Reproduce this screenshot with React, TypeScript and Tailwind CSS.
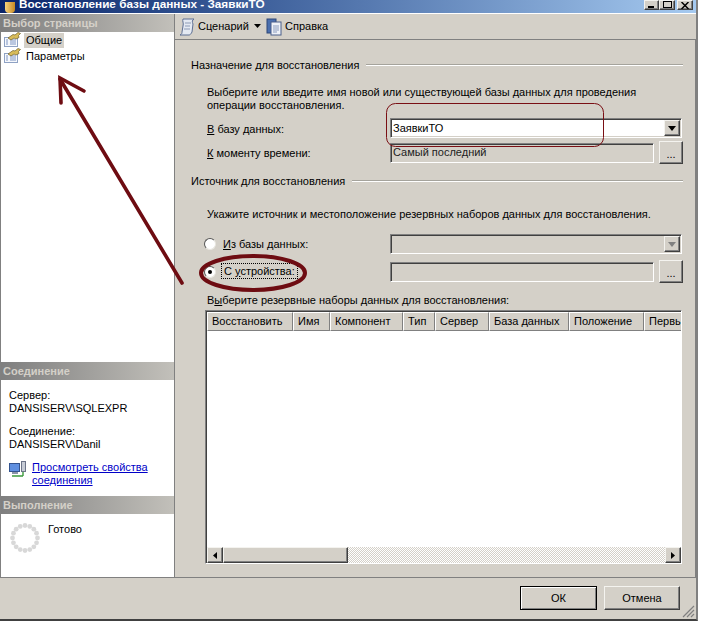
import React from "react";

const sunken = "border border-t-[#808080] border-l-[#808080] border-r-white border-b-white shadow-[inset_1px_1px_0_#404040,inset_-1px_-1px_0_#d4d0c8]";
const raised = "border border-t-[#f4f3ef] border-l-[#f4f3ef] border-r-[#404040] border-b-[#404040] shadow-[inset_-1px_-1px_0_#808080]";

function PropsIcon() {
  return (
    <svg width="17" height="16" viewBox="0 0 17 16" className="shrink-0">
      <rect x="0.5" y="5.5" width="13" height="9" fill="#f6f8fc" stroke="#8fa2c4" />
      <path d="M2 8h2M6 8h6M2 10h2M6 10h6M2 12h2M6 12h6" stroke="#7f96c4" />
      <path d="M4 6l5-3.5 2 .5 3-2.5 2.5 1-2 2 .5 2-3 1.5-2-1-3 2z" fill="#d8bc5a" stroke="#6e5f2a" strokeWidth="0.7" />
    </svg>
  );
}
function ScrollIcon() {
  return (
    <svg width="18" height="18" viewBox="0 0 18 18" className="shrink-0">
      <path d="M5 1h11c-2 1-2 3-1 5l-1 8c-1 2-2 3-3 3H2c2-1 2-2 2-3l1-6C6 5 4 3 5 1z" fill="#e4e9f2" stroke="#5d6f93" />
      <path d="M7 5h6M7 8h5M6 11h6" stroke="#8c9ab5" />
    </svg>
  );
}
function HelpIcon() {
  return (
    <svg width="16" height="18" viewBox="0 0 16 18" className="shrink-0">
      <rect x="1" y="1" width="9" height="14" fill="#4a6fae" stroke="#2d4677" />
      <rect x="5" y="4" width="10" height="13" fill="#eef1f7" stroke="#4a5f8a" />
      <path d="M7 8h6M7 10h6M7 12h6M7 14h4" stroke="#8a9bbd" />
    </svg>
  );
}
function ConnIcon() {
  return (
    <svg width="18" height="18" viewBox="0 0 18 18" className="shrink-0">
      <rect x="0.5" y="2.5" width="10" height="8" fill="#5f8fe0" stroke="#33538f" />
      <rect x="3" y="11" width="6" height="2" fill="#8a94a8" />
      <rect x="12.5" y="0.5" width="4" height="10" fill="#c7ccd6" stroke="#6c7488" />
      <path d="M3 15h11M14 15v-4" stroke="#3d9a3d" strokeWidth="1.4" fill="none" />
    </svg>
  );
}
function Spinner() {
  const dots = Array.from({ length: 16 }, (_, i) => {
    const a = (i / 16) * Math.PI * 2;
    return <circle key={i} cx={15 + 12.5 * Math.cos(a)} cy={15 + 12.5 * Math.sin(a)} r="2.4" fill="#d8d8d8" />;
  });
  return <svg width="30" height="30" viewBox="0 0 30 30" className="shrink-0">{dots}</svg>;
}
function Down({ c = "#000" }: { c?: string }) {
  return <svg width="8" height="5" viewBox="0 0 8 5"><path d="M0 0h8L4 5z" fill={c} /></svg>;
}
function Combo({ text, disabled }: { text?: string; disabled?: boolean }) {
  return (
    <div className={`w-[292px] h-[20px] flex items-center ${sunken} ${disabled ? "bg-[#d4d0c8]" : "bg-white"}`}>
      <span className="flex-1 pl-[2px] text-black">{text}</span>
      <div className={`w-[16px] h-[16px] mr-[1px] flex items-center justify-center bg-[#d4d0c8] ${raised}`}>
        <Down c={disabled ? "#808080" : "#000"} />
      </div>
    </div>
  );
}
function Dots() {
  return (
    <div className={`w-[24px] h-[23px] ml-[5px] flex items-end justify-center pb-[3px] leading-none bg-[#d4d0c8] ${raised}`}>...</div>
  );
}
function Input({ text }: { text?: string }) {
  return <div className={`w-[264px] h-[20px] flex items-center pl-[2px] text-[#222] bg-[#d4d0c8] ${sunken}`}>{text}</div>;
}
function Legend({ text, top }: { text: string; top: string }) {
  return (
    <div className={`flex items-center w-[492px] ${top} h-[14px]`}>
      <span className="whitespace-nowrap">{text}</span>
      <div className="flex-1 h-[2px] ml-[7px] border-t border-t-[#a5a39c] border-b border-b-white" />
    </div>
  );
}
function SideHead({ text }: { text: string }) {
  return (
    <div className="h-[18px] flex items-center pl-[2px] font-bold text-[#d4d0c8] bg-gradient-to-r from-[#7f7f7f] to-[#c2c0ba] shrink-0">{text}</div>
  );
}
function Radio({ on }: { on?: boolean }) {
  return (
    <div className="w-[12px] h-[12px] rounded-full bg-white border border-t-[#555] border-l-[#555] border-r-[#e8e6e0] border-b-[#e8e6e0] flex items-center justify-center">
      {on && <div className="w-[4px] h-[4px] rounded-full bg-black" />}
    </div>
  );
}

const cols: [string, string][] = [
  ["Восстановить", "w-[86px]"],
  ["Имя", "w-[37px]"],
  ["Компонент", "w-[73px]"],
  ["Тип", "w-[32px]"],
  ["Сервер", "w-[54px]"],
  ["База данных", "w-[80px]"],
  ["Положение", "w-[75px]"],
  ["Первь", "w-[38px]"],
];

export default function App() {
  return (
    <div className="relative w-[704px] h-[632px] bg-white overflow-hidden text-[11px] leading-[13px] text-black font-['Liberation_Sans',sans-serif]">
      <div className="w-[698px] h-[621px] flex flex-col bg-[#d4d0c8] border-b-2 border-b-[#404040] border-r-2 border-r-[#808080]">
        {/* Title bar */}
        <div className="h-[13px] shrink-0 flex items-end overflow-hidden bg-gradient-to-r from-[#0a246a] to-[#a6caf0]">
          <div className="w-[10px] h-[11px] ml-[5px] mr-[4px] rounded-b-sm bg-gradient-to-r from-[#f6d27a] to-[#c78a1e]" />
          <span className="text-white font-bold text-[11.75px] leading-[13px] mb-[3px] whitespace-nowrap">Восстановление базы данных - ЗаявкиТО</span>
          <div className="flex-1" />
          <div className="flex mr-[3px] mb-[3px] items-end">
            <div className={`w-[15px] h-[10px] bg-[#d4d0c8] ${raised} flex items-end pl-[3px] pb-[1px]`}><div className="w-[6px] h-[2px] bg-black" /></div>
            <div className={`w-[16px] h-[10px] bg-[#d4d0c8] ${raised} flex items-end justify-center pb-[1px]`}><div className="w-[9px] h-[7px] border border-black" /></div>
            <div className={`w-[16px] h-[10px] ml-[2px] bg-[#d4d0c8] ${raised} flex items-center justify-center`}>
              <svg width="8" height="7" viewBox="0 0 8 7"><path d="M0.5 0L7.5 7M7.5 0L0.5 7" stroke="#000" strokeWidth="1.5" /></svg>
            </div>
          </div>
        </div>
        <div className="h-[1px] shrink-0 bg-white" />
        {/* Body */}
        <div className="flex flex-1 min-h-0">
          {/* Sidebar */}
          <div className="w-[175px] shrink-0 flex flex-col bg-white border-l border-l-[#808080] border-r border-r-[#808080] border-b border-b-[#808080]">
            <SideHead text="Выбор страницы" />
            <div className="h-[330px] shrink-0 pl-[3px]">
              <div className="flex items-center h-[16px]">
                <PropsIcon />
                <span className="ml-[3px] px-[2px] bg-[#d4d0c8] h-[15px] leading-[15px]">Общие</span>
              </div>
              <div className="flex items-center h-[16px]">
                <PropsIcon />
                <span className="ml-[5px]">Параметры</span>
              </div>
            </div>
            <SideHead text="Соединение" />
            <div className="h-[116px] shrink-0 pl-[8px] pt-[9px]">
              <div>Сервер:</div>
              <div>DANSISERV\SQLEXPR</div>
              <div className="mt-[10px]">Соединение:</div>
              <div>DANSISERV\Danil</div>
              <div className="flex mt-[10px]">
                <ConnIcon />
                <a className="ml-[5px] text-[#0000c8] underline">Просмотреть свойства<br />соединения</a>
              </div>
            </div>
            <SideHead text="Выполнение" />
            <div className="flex-1 flex pl-[9px] pt-[9px]">
              <Spinner />
              <span className="ml-[8px]">Готово</span>
            </div>
          </div>
          {/* Main */}
          <div className="flex-1 flex flex-col min-w-0">
            <div className="h-[26px] shrink-0 flex items-center pl-[3px] border-b border-b-[#808080]">
              <ScrollIcon />
              <span className="ml-[2px] w-[49px]">Сценарий</span>
              <div className="ml-[7px] mb-[1px]"><svg width="7" height="4" viewBox="0 0 7 4"><path d="M0 0h7L3.5 4z" fill="#000" /></svg></div>
              <div className="ml-[5px]"><HelpIcon /></div>
              <span className="ml-[3px]">Справка</span>
            </div>
            <div className="flex-1 min-h-0 border-r border-r-[#808080] border-b border-b-[#808080] pl-[16px]">
              <Legend text="Назначение для восстановления" top="mt-[18px]" />
              <div className="pl-[16px]">
                <div className="mt-[14px] w-[470px]">Выберите или введите имя новой или существующей базы данных для проведения операции восстановления.</div>
                <div className="flex items-center mt-[6px] h-[20px]">
                  <span className="w-[183px] pt-[2px]"><u>В</u> базу данных:</span>
                  <Combo text="ЗаявкиТО" />
                </div>
                <div className="flex items-center mt-[3px] h-[23px]">
                  <span className="w-[183px] pt-[1px]"><u>К</u> моменту времени:</span>
                  <Input text="Самый последний" />
                  <Dots />
                </div>
              </div>
              <Legend text="Источник для восстановления" top="mt-[10px]" />
              <div className="pl-[16px]">
                <div className="mt-[20px]">Укажите источник и местоположение резервных наборов данных для восстановления.</div>
                <div className="flex items-center mt-[13px] h-[20px]">
                  <div className="-ml-[3px] w-[19px]"><Radio /></div>
                  <span className="w-[167px]"><u>И</u>з базы данных:</span>
                  <Combo disabled />
                </div>
                <div className="flex items-center mt-[6px] h-[23px]">
                  <div className="-ml-[3px] w-[18px]"><Radio on /></div>
                  <span className="w-[168px]"><span className="outline-1 outline-dotted outline-black px-[2px] py-[1px]">С <u>у</u>стройства:</span></span>
                  <Input />
                  <Dots />
                </div>
                <div className="mt-[11px]">В<u>ы</u>берите резервные наборы данных для восстановления:</div>
                {/* Grid */}
                <div className="-ml-[2px] mt-[3px] w-[477px] h-[254px] flex flex-col bg-white overflow-hidden border border-t-[#808080] border-l-[#808080] border-r-white border-b-white shadow-[inset_1px_1px_0_#404040]">
                  <div className="flex h-[19px] ml-[1px] mt-[1px] shrink-0 overflow-hidden">
                    {cols.map(([t, w]) => (
                      <div key={t} className={`${w} shrink-0 pl-[4px] flex items-center whitespace-nowrap bg-[#d4d0c8] border-l border-l-white border-t border-t-white border-r border-r-[#808080] border-b border-b-[#808080] overflow-hidden`}>{t}</div>
                    ))}
                  </div>
                  <div className="flex-1" />
                  <div className="h-[16px] ml-[1px] shrink-0 flex bg-[repeating-conic-gradient(#d4d0c8_0_25%,#fff_0_50%)] bg-[length:2px_2px]">
                    <div className={`w-[16px] bg-[#d4d0c8] flex items-center justify-center ${raised}`}><svg width="4" height="7" viewBox="0 0 4 7"><path d="M4 0v7L0 3.5z" fill="#000" /></svg></div>
                    <div className={`w-[125px] bg-[#d4d0c8] ${raised}`} />
                    <div className="flex-1" />
                    <div className={`w-[16px] bg-[#d4d0c8] flex items-center justify-center ${raised}`}><svg width="4" height="7" viewBox="0 0 4 7"><path d="M0 0v7l4-3.5z" fill="#000" /></svg></div>
                  </div>
                </div>
              </div>
            </div>
          </div>
        </div>
        {/* Footer */}
        <div className="h-[41px] shrink-0 flex items-start justify-end relative pt-[8px] pr-[16px]">
          <div className="w-[77px] h-[24px] flex items-center justify-center bg-[#d4d0c8] border border-black shadow-[inset_1px_1px_0_#fff,inset_-1px_-1px_0_#808080]">ОК</div>
          <div className={`w-[76px] h-[24px] ml-[7px] flex items-center justify-center bg-[#d4d0c8] ${raised}`}>Отмена</div>
          <svg width="13" height="13" viewBox="0 0 13 13" className="absolute right-[1px] bottom-[1px]">
            <path d="M12 1L1 12M12 5L5 12M12 9L9 12" stroke="#808080" strokeWidth="1.2" />
          </svg>
        </div>
      </div>
      {/* Annotations */}
      <svg width="704" height="632" viewBox="0 0 704 632" className="absolute left-0 top-0 pointer-events-none">
        <path d="M182 283L60 79" stroke="#6e0c12" strokeWidth="3.6" strokeLinecap="round" fill="none" />
        <path d="M84 91L60 78L61 103" stroke="#6e0c12" strokeWidth="3.6" strokeLinecap="round" fill="none" />
        <ellipse cx="253" cy="273" rx="52" ry="17" stroke="#6e0c12" strokeWidth="4" fill="none" />
        <rect x="386.5" y="103.5" width="217" height="43" rx="9" stroke="#7a0f14" strokeWidth="1" fill="none" />
      </svg>
    </div>
  );
}
